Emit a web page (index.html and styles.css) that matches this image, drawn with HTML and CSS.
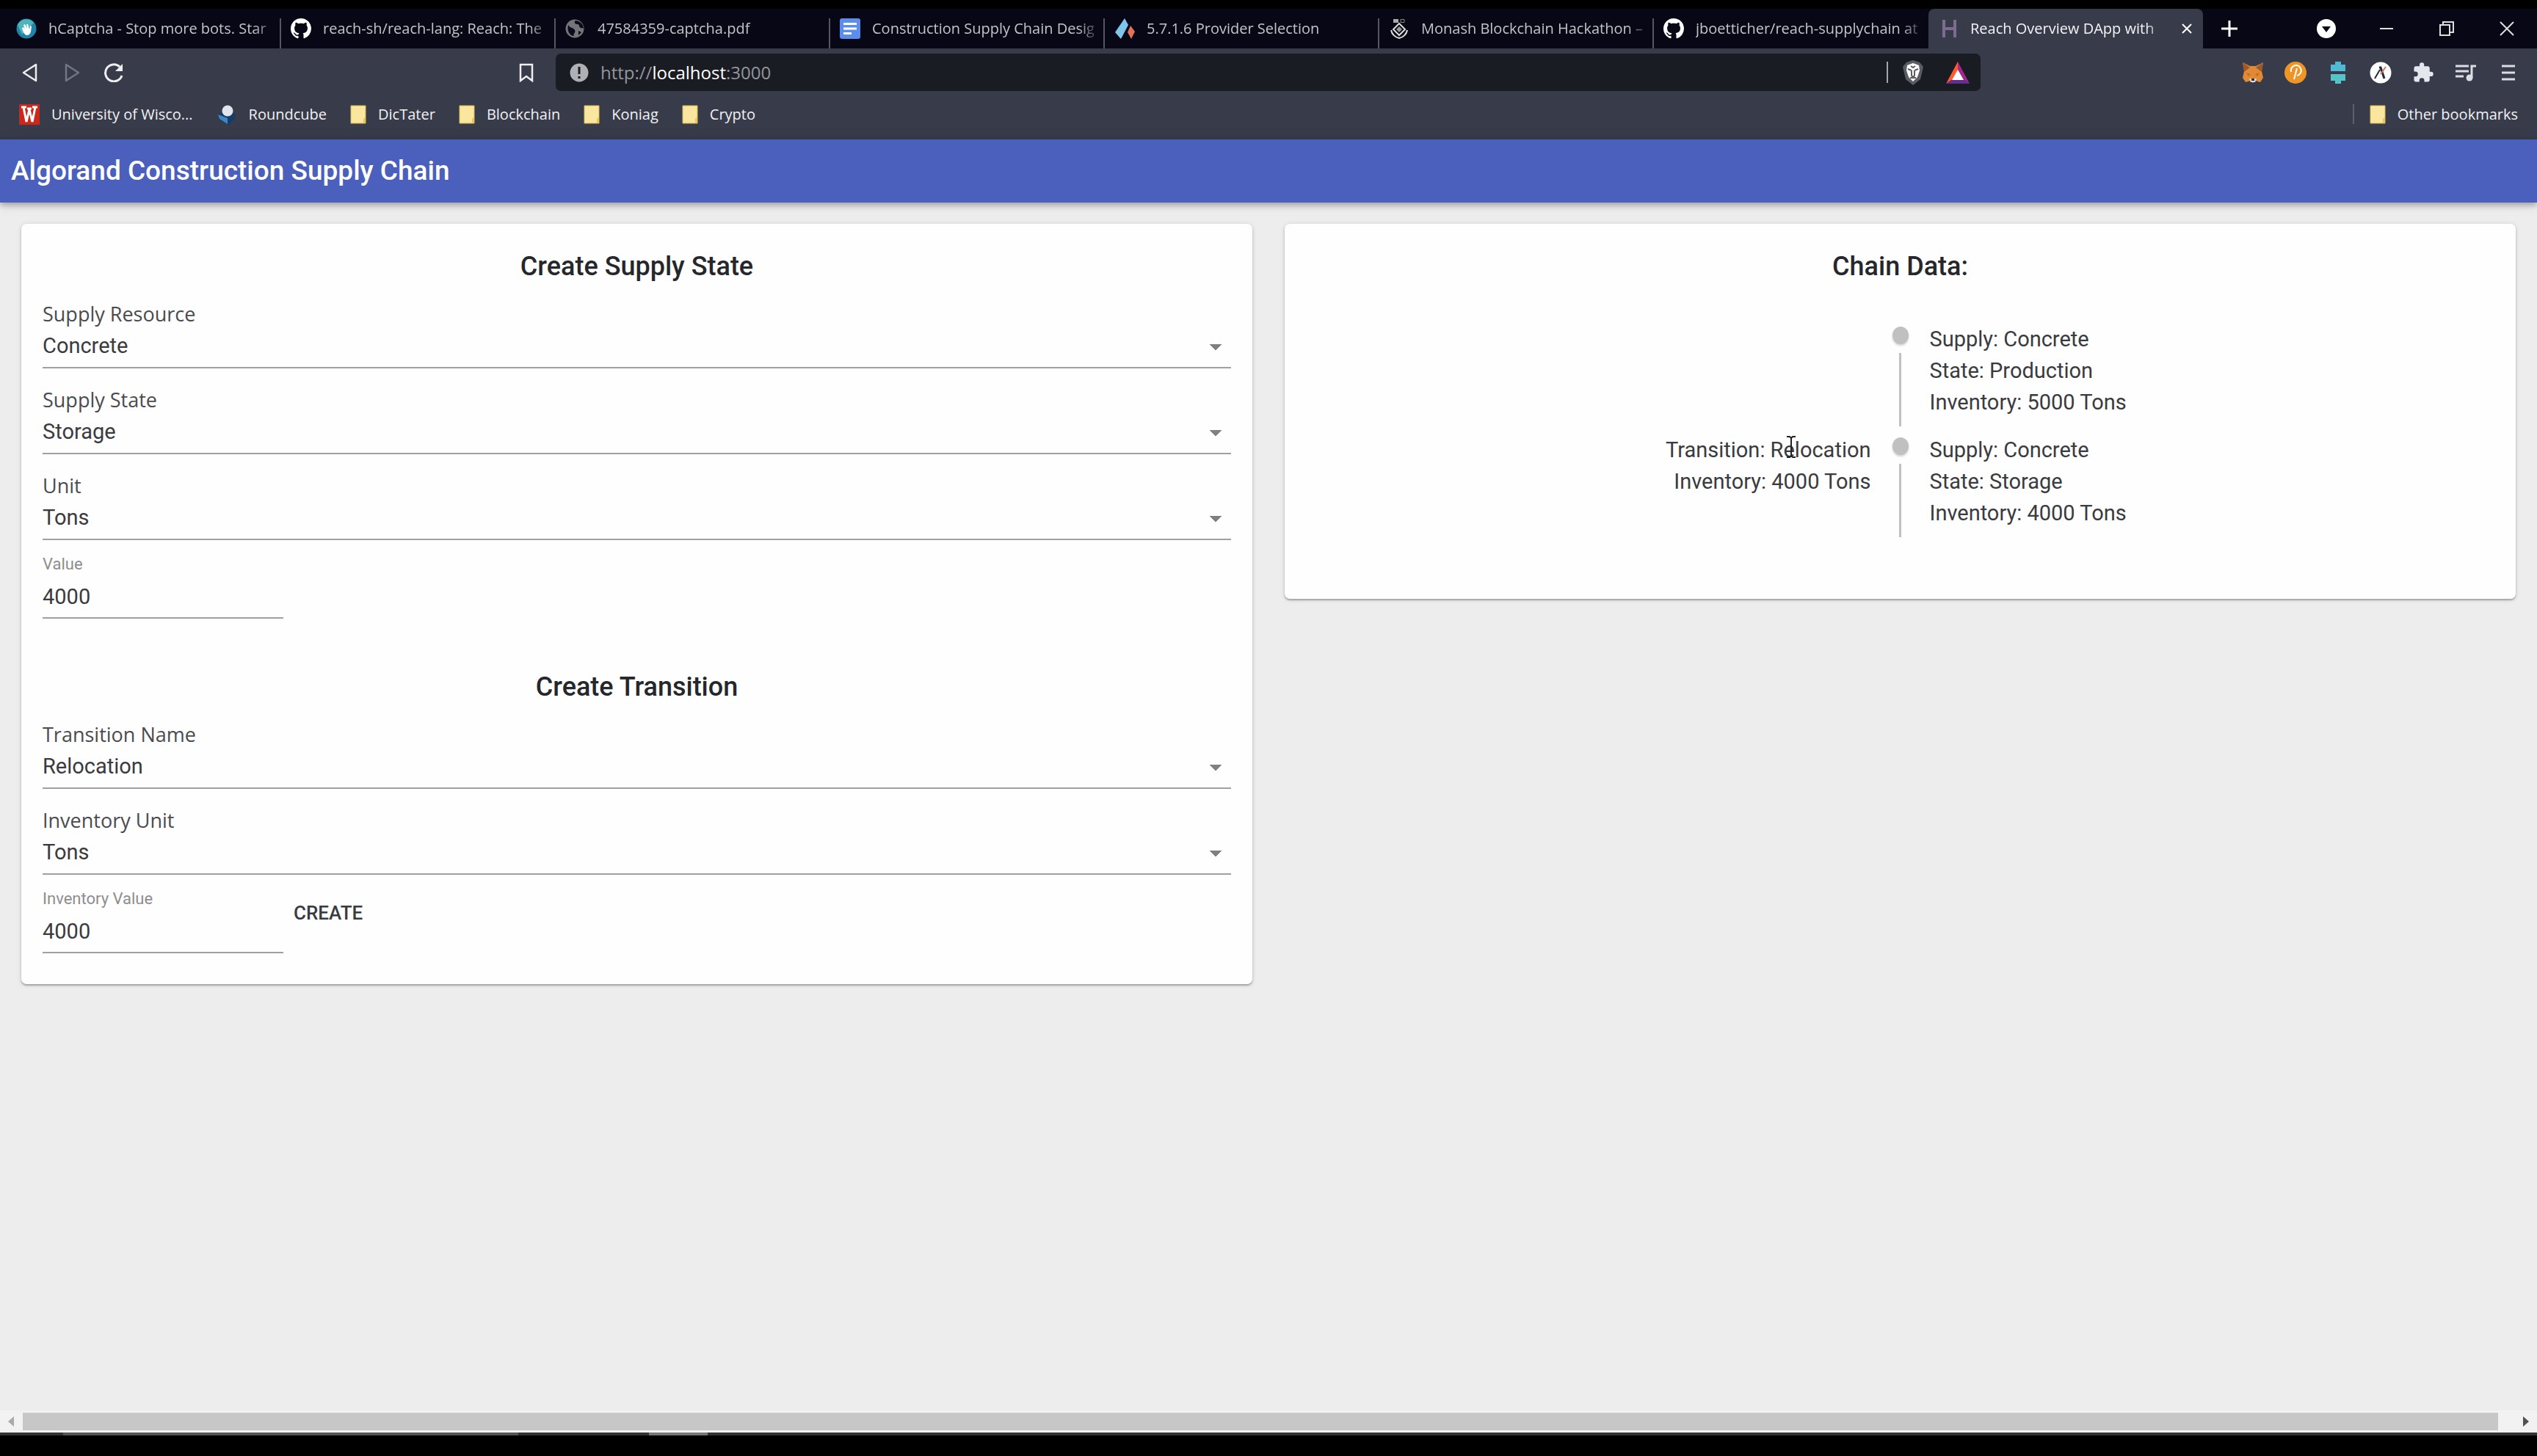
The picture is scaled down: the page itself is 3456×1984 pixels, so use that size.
FILE: index.html
```html
<!DOCTYPE html>
<html lang="en">
<head>
<meta charset="utf-8">
<title>Reach Overview DApp with</title>
<link rel="stylesheet" href="styles.css">
</head>
<body>
<svg class="defs" aria-hidden="true">
  <symbol id="github" viewBox="0 0 16 16"><path fill="#fff" d="M8 0C3.58 0 0 3.58 0 8c0 3.54 2.29 6.53 5.47 7.59.4.07.55-.17.55-.38 0-.19-.01-.82-.01-1.49-2.01.37-2.53-.49-2.69-.94-.09-.23-.48-.94-.82-1.13-.28-.15-.68-.52-.01-.53.63-.01 1.08.58 1.23.82.72 1.21 1.87.87 2.33.66.07-.52.28-.87.51-1.07-1.78-.2-3.64-.89-3.64-3.95 0-.87.31-1.59.82-2.15-.08-.2-.36-1.02.08-2.12 0 0 .67-.21 2.2.82.64-.18 1.32-.27 2-.27s1.36.09 2 .27c1.53-1.04 2.2-.82 2.2-.82.44 1.1.16 1.92.08 2.12.51.56.82 1.27.82 2.15 0 3.07-1.87 3.75-3.65 3.95.29.25.54.73.54 1.48 0 1.07-.01 1.93-.01 2.2 0 .21.15.46.55.38A8.01 8.01 0 0 0 16 8c0-4.42-3.58-8-8-8z"/></symbol>
  <symbol id="folder" viewBox="0 0 22 26"><path fill="#fbe6a0" stroke="#d9b94f" d="M1 1h20v24H1z"/><path fill="#e8c65c" d="M18 19l3-3v9h-3z"/></symbol>
</svg>

<header class="browser">
  <div class="tabstrip">
    <nav class="tabs" aria-label="Tabs">
      <a class="tab" href="#"><svg class="favicon" viewBox="0 0 28 28"><circle cx="14" cy="14" r="13.500" fill="#1f86a8"/><path d="M2 9a13 13 0 0 1 22-3L8 22z" fill="#4fb3bb"/><path fill="#fff" d="M8 13l2-1 2 3-2-6 2-1 3 6-1-6 2 0 2 7 1-5 2 1-1 7c-1 4-3 5-6 5-3-1-5-5-6-10z"/></svg><span class="tab-title">hCaptcha - Stop more bots. Star</span></a>
      <a class="tab" href="#"><svg class="favicon"><use href="#github"/></svg><span class="tab-title">reach-sh/reach-lang: Reach: The</span></a>
      <a class="tab" href="#"><svg class="favicon" viewBox="0 0 28 28"><circle cx="13" cy="14" r="12.500" fill="#74757b"/><path fill="#0b0b1a" d="M4 9c3 5 7 3 9 7s-3 4-1 8c-6 0-10-7-8-15zM14 3c-3 3 0 5 3 5s1 4 4 5 3-1 4 2c0-6-3-11-11-12zM18 17l4 2-4 4z"/></svg><span class="tab-title">47584359-captcha.pdf</span></a>
      <a class="tab" href="#"><svg class="favicon" viewBox="0 0 28 28"><rect width="28" height="28" rx="3" fill="#5b8def"/><path stroke="#fff" stroke-width="3" d="M5 7.500h18M5 14h18M5 20.500h11"/></svg><span class="tab-title">Construction Supply Chain Desig</span></a>
      <a class="tab" href="#"><svg class="favicon" viewBox="0 0 28 28"><path fill="#7fc4ea" d="M14 0l5 9-10 19-8-9z"/><path fill="#e2725b" d="M22 10l6 8-5 10-5-9z"/></svg><span class="tab-title">5.7.1.6 Provider Selection</span></a>
      <a class="tab" href="#"><svg class="favicon" viewBox="0 0 28 28"><path fill="#aaa" d="M6 1h7v5H6z"/><path fill="none" stroke="#888" d="M16 1.500h5v4h-5z"/><path fill="none" stroke="#ddd" stroke-width="2" d="M14 7l8 8-8 8-8-8zM3 16c1 6 6 10 11 11 5-1 10-5 11-11"/><path fill="#999" d="M14 11l4 4-4 4-4-4z"/></svg><span class="tab-title">Monash Blockchain Hackathon –</span></a>
      <a class="tab" href="#"><svg class="favicon"><use href="#github"/></svg><span class="tab-title">jboetticher/reach-supplychain at</span></a>
      <a class="tab active" href="#" aria-current="page"><svg class="favicon" viewBox="0 0 28 28"><path fill="none" stroke="#7e6b90" stroke-width="4" d="M8 2v24M23 2v24M8 14h15"/></svg><span class="tab-title">Reach Overview DApp with</span><svg class="close" viewBox="0 0 16 16"><path stroke="#fff" stroke-width="2" d="M2 2l12 12M14 2L2 14"/></svg></a>
    </nav>
    <button class="new-tab" aria-label="New tab"><svg viewBox="0 0 22 22"><path stroke="#fff" stroke-width="3" d="M11 0v22M0 11h22"/></svg></button>
    <div class="window-controls">
      <button aria-label="Search tabs"><svg viewBox="0 0 26 26"><circle cx="13" cy="13" r="13" fill="#fff"/><path fill="#0a0a18" d="M7 10h12l-6 8z"/></svg></button>
      <button aria-label="Minimize"><svg viewBox="0 0 26 26"><path stroke="#ddd" stroke-width="2" d="M4 13h18"/></svg></button>
      <button aria-label="Restore"><svg viewBox="0 0 26 26"><path fill="none" stroke="#ddd" stroke-width="2" d="M4 8h13v14H4zM8 8V4h14v14h-5"/></svg></button>
      <button aria-label="Close"><svg viewBox="0 0 26 26"><path stroke="#ddd" stroke-width="2" d="M4 4l18 18M22 4L4 22"/></svg></button>
    </div>
  </div>

  <div class="toolbar">
    <div class="nav-buttons">
      <button aria-label="Back"><svg viewBox="0 0 26 26"><path fill="none" stroke="#eee" stroke-width="2.500" stroke-linejoin="round" d="M21 2v22L4 13z"/></svg></button>
      <button aria-label="Forward"><svg viewBox="0 0 26 26"><path fill="none" stroke="#74767f" stroke-width="2.500" stroke-linejoin="round" d="M5 2v22l17-11z"/></svg></button>
      <button aria-label="Reload"><svg viewBox="0 0 26 26"><path fill="none" stroke="#eee" stroke-width="3" d="M24 17A11.500 11.500 0 1 1 21 5"/><path fill="#eee" d="M25 1v10H15z"/></svg></button>
    </div>
    <button class="bookmark" aria-label="Bookmark this page"><svg viewBox="0 0 26 26"><path fill="none" stroke="#eee" stroke-width="2.500" d="M5 2h16v22l-8-6-8 6z"/></svg></button>
    <div class="address">
      <svg viewBox="0 0 26 26"><circle cx="13" cy="13" r="12.500" fill="#aeb0b5"/><path stroke="#1a1c24" stroke-width="3" d="M13 5v10M13 18v3"/></svg>
      <div class="url" role="textbox" aria-label="Address">http://<b>localhost</b>:3000</div>
      <span class="rule"></span>
      <svg class="shield" viewBox="0 0 28 34"><path fill="#5a5c66" d="M5 3l9-3 9 3 5 6-4 17-10 8-10-8L0 9z"/><path fill="#fff" d="M6 7l8-3 8 3 1 7-3 9-6 6-6-6-3-9z"/><path fill="none" stroke="#5a5c66" stroke-width="2" d="M7 12l5 2M21 12l-5 2M12 14v7l2 2 2-2v-7M10 24h8M11 8l3 2 3-2"/></svg>
      <svg class="bat" viewBox="0 0 32 30"><path fill="#ff5b2e" d="M16 0v12l-7 12-9 6z"/><path fill="#a3278f" d="M16 0l16 30-9-6-7-12z"/><path fill="#662d91" d="M0 30l9-6h14l9 6z"/><path fill="#fff" d="M16 11l8 14H8z"/></svg>
    </div>
    <div class="extensions">
      <button aria-label="MetaMask"><svg viewBox="0 0 30 30"><path fill="#e08a35" d="M1 1l10 5h8l10-5-2 12 2 9-4 6-7-2-3 3-3-3-7 2-4-6 2-9z"/><path fill="#9c5a2b" d="M1 1l10 7-8 6zM29 1L19 8l8 6z"/><path fill="#ca6a22" d="M6 15l6 2-3 3zM24 15l-6 2 3 3z"/><path fill="#ddd" d="M10 23h10l-2 5h-6z"/><path fill="#333" d="M13 23h4v3h-4z"/></svg></button>
      <button aria-label="Polkadot"><svg viewBox="0 0 30 30"><circle cx="15" cy="15" r="15" fill="#ee9526"/><path fill="none" stroke="#fff" stroke-width="2" d="M9 14a7 7 0 1 1 8 5M17 9l-4 15"/></svg></button>
      <button aria-label="Ledger"><svg viewBox="0 0 30 30"><path fill="#4fb9d6" d="M11 0h8v4h6v9H5V4h6z"/><path fill="#55c4c8" d="M5 17h20v9h-6v4h-8v-4H5z"/></svg></button>
      <button aria-label="AlgoSigner"><svg viewBox="0 0 30 30"><circle cx="15" cy="15" r="14.500" fill="#fff"/><path fill="none" stroke="#222c40" stroke-width="3" d="M13 8h2l5 15"/><path stroke="#222c40" stroke-width="2" d="M7 23l7-12"/><path stroke="#e2725b" stroke-width="2" d="M15 17l7-10"/></svg></button>
      <button aria-label="Extensions"><svg viewBox="0 0 24 24"><path fill="#e6e7ee" d="M20.500 11H19V7c0-1.100-.9-2-2-2h-4V3.500a2.500 2.500 0 0 0-5 0V5H4c-1.100 0-2 .9-2 2v3.800h1.500a2.700 2.700 0 0 1 0 5.400H2V20c0 1.100.9 2 2 2h3.800v-1.500a2.700 2.700 0 0 1 5.400 0V22H17c1.100 0 2-.9 2-2v-4h1.500a2.500 2.500 0 0 0 0-5z"/></svg></button>
      <button aria-label="Media"><svg viewBox="0 0 30 30"><path stroke="#dcdde3" stroke-width="3" d="M1 6h18M1 13h18M1 20h11"/><path fill="none" stroke="#dcdde3" stroke-width="3" d="M23 22V6h6"/><circle cx="20" cy="22" r="4.500" fill="#dcdde3"/></svg></button>
      <button aria-label="Menu"><svg viewBox="0 0 30 30"><path stroke="#dcdde3" stroke-width="3" d="M6 6h18M6 15h18M6 24h18"/></svg></button>
    </div>
  </div>

  <nav class="bookmarks" aria-label="Bookmarks">
    <a href="#"><svg class="favicon" viewBox="0 0 28 28"><path fill="#c9281c" d="M0 0h28v28H0z"/><path fill="none" stroke="#fff" stroke-width="3" d="M6 4l4 20 4-17 4 17 4-20M3 4h7M18 4h7M11 6h6"/></svg>University of Wisco...</a>
    <a href="#"><svg class="favicon" viewBox="0 0 28 28"><path fill="#163d66" d="M2 14l12-6 12 6-2 7-8 7-12-7z"/><path fill="#3f86c4" d="M2 14l13 5v8L4 20z"/><circle cx="15" cy="9" r="7.500" fill="#dfe6ee"/></svg>Roundcube</a>
    <a href="#"><svg class="folder"><use href="#folder"/></svg>DicTater</a>
    <a href="#"><svg class="folder"><use href="#folder"/></svg>Blockchain</a>
    <a href="#"><svg class="folder"><use href="#folder"/></svg>Koniag</a>
    <a href="#"><svg class="folder"><use href="#folder"/></svg>Crypto</a>
    <a class="other" href="#"><svg class="folder"><use href="#folder"/></svg>Other bookmarks</a>
  </nav>
</header>

<div class="app">
  <header class="appbar"><h1>Algorand Construction Supply Chain</h1></header>
  <main class="cards">
    <form class="card form">
      <h2>Create Supply State</h2>
      <div class="fields">
        <div class="field"><label for="resource">Supply Resource</label><select id="resource"><option>Concrete</option></select></div>
        <div class="field"><label for="state">Supply State</label><select id="state"><option>Storage</option></select></div>
        <div class="field"><label for="unit">Unit</label><select id="unit"><option>Tons</option></select></div>
        <div class="textfield"><label for="value">Value</label><input id="value" type="text" value="4000"></div>
      </div>
      <h2 class="second">Create Transition</h2>
      <div class="fields">
        <div class="field"><label for="transition">Transition Name</label><select id="transition"><option>Relocation</option></select></div>
        <div class="field"><label for="inv-unit">Inventory Unit</label><select id="inv-unit"><option>Tons</option></select></div>
        <div class="submit-row">
          <div class="textfield"><label for="inv-value">Inventory Value</label><input id="inv-value" type="text" value="4000"></div>
          <button class="create" type="button">CREATE</button>
        </div>
      </div>
    </form>

    <section class="card">
      <h2>Chain Data:</h2>
      <ul class="timeline">
        <li>
          <div class="before"></div>
          <div class="marker"></div>
          <div class="after"><p>Supply: Concrete</p><p>State: Production</p><p>Inventory: 5000 Tons</p></div>
        </li>
        <li>
          <div class="before"><p>Transition: Relocation</p><p>Inventory: 4000 Tons</p>
            <svg class="cursor" viewBox="0 0 14 30" aria-hidden="true"><path fill="none" stroke="#222" stroke-width="2" d="M1 1h4l2 2 2-2h4M7 3v24M1 29h4l2-2 2 2h4"/></svg></div>
          <div class="marker"></div>
          <div class="after"><p>Supply: Concrete</p><p>State: Storage</p><p>Inventory: 4000 Tons</p></div>
        </li>
      </ul>
    </section>
  </main>
</div>

<div class="scrollbar">
  <svg viewBox="0 0 8 14"><path fill="#aaa" d="M8 0v14L0 7z"/></svg>
  <div class="thumb"></div>
  <svg viewBox="0 0 8 14"><path fill="#505050" d="M0 0v14l8-7z"/></svg>
</div>
<div class="taskbar"><span class="task-wide"></span><span class="task-small"></span></div>
</body>
</html>
```
FILE: styles.css
```css
* { box-sizing: border-box; }

body {
  margin: 0;
  min-height: 100vh;
  display: flex;
  flex-direction: column;
  padding: 12px 0 28px;
  background: #000;
  font-family: Roboto, sans-serif;
  color: #3a3b40;
}

.defs { display: none; }
h1, h2, p, ul { margin: 0; padding: 0; font-weight: 400; }
button { border: 0; padding: 0; background: none; font: inherit; color: inherit; }
a { color: inherit; text-decoration: none; }
svg { display: block; flex: none; }

/* Browser chrome */
.browser {
  font-family: "Open Sans", "Noto Sans", sans-serif;
  font-size: 20px;
  color: #f1f1f3;
  background: #373b4a;
}

.tabstrip {
  display: flex;
  align-items: center;
  height: 54px;
  padding-left: 9px;
  background: #070715;
}
.tabs { display: flex; flex: 0 1 2992px; height: 54px; }
.tab {
  flex: 1 1 0;
  min-width: 0;
  display: flex;
  align-items: center;
  gap: 16px;
  padding: 0 4px 0 13px;
  color: #c3c3c8;
  background: linear-gradient(#55565f, #55565f) right bottom / 2px 41px no-repeat;
}
.tab:nth-last-child(2) { background: none; }
.tab.active {
  background: #373b4a;
  border-radius: 8px 8px 0 0;
  color: #f4f4f6;
  font-weight: 500;
}
.favicon { width: 28px; height: 28px; }
.tab-title {
  flex: 1;
  min-width: 0;
  overflow: hidden;
  white-space: nowrap;
  line-height: 32px;
  mask-image: linear-gradient(90deg, #000 calc(100% - 32px), transparent);
}
.close { width: 16px; height: 16px; margin-right: 10px; }
.new-tab { margin-left: 25px; }
.new-tab svg { width: 22px; height: 22px; }
.window-controls { display: flex; gap: 56px; margin-left: auto; padding-right: 28px; }
.window-controls svg { width: 26px; height: 26px; }

.toolbar { display: flex; align-items: center; height: 65px; padding: 0 24px 0 28px; }
.toolbar svg { width: 26px; height: 26px; }
.nav-buttons { display: flex; flex: 0 1 676px; gap: 31px; }
.address {
  display: flex;
  align-items: center;
  flex: 0 1 1941px;
  height: 51px;
  margin-left: 27px;
  padding: 0 15px 0 19px;
  border-radius: 7px;
  background: #1a1c24;
}
.url { flex: 1; padding-left: 16px; font-size: 24px; color: #94959c; }
.url b { font-weight: 400; color: #fff; }
.rule { width: 2px; height: 29px; margin-right: 20px; background: #a5a6ab; }
.address .shield { width: 28px; height: 34px; margin-right: 31px; }
.address .bat { width: 32px; height: 30px; }
.extensions { display: flex; gap: 28px; margin-left: auto; }
.toolbar .extensions svg { width: 30px; height: 30px; }

.bookmarks { display: flex; align-items: center; gap: 32px; height: 59px; padding: 0 26px 10px; }
.bookmarks a { display: flex; align-items: center; gap: 16px; }
.folder { width: 22px; height: 26px; }
.bookmarks .other { margin-left: auto; padding-left: 21px; border-left: 2px solid #5d606c; }

/* Application */
.app { flex: 1; background: #ededed; }
.appbar {
  display: flex;
  align-items: center;
  height: 86px;
  padding: 0 15px;
  background: #4b60bd;
  color: #fff;
  box-shadow: 0 4px 7px rgba(0, 0, 0, .25), 0 2px 18px rgba(0, 0, 0, .1);
}
h1, h2 { font-size: 36px; font-weight: 500; line-height: 58px; }
h1 { font-size: 37px; }
h2 { text-align: center; color: #26272b; }

.cards {
  display: grid;
  grid-template-columns: 1fr 1fr;
  align-items: start;
  gap: 44px;
  padding: 29px;
}
.card {
  padding: 29px 29px 84px;
  border-radius: 7px;
  background: #fefefe;
  box-shadow: 0 2px 2px rgba(0, 0, 0, .25), 0 1px 6px rgba(0, 0, 0, .14);
}
.form { padding-bottom: 42px; }
.second { margin-top: 64px; }
.fields { display: flex; flex-direction: column; gap: 22px; margin-top: 15px; }
.field { display: flex; flex-direction: column; }
.field label { font: 400 27px/42px "Open Sans", "Noto Sans", sans-serif; color: #4a4b50; }
select, input {
  appearance: none;
  width: 100%;
  margin: 0;
  border: 0;
  border-bottom: 2px solid #a0a0a0;
  border-radius: 0;
  background: transparent;
  font: 400 29px/44px Roboto, sans-serif;
  color: #3a3b40;
  outline: 0;
}
select {
  height: 53px;
  padding: 0 0 7px;
  background: conic-gradient(from -45deg at 50% 100%, #808080 90deg, transparent 0) right 13px top 20px / 16px 8px no-repeat;
}
.textfield { display: flex; flex-direction: column; width: 328px; }
.textfield label { font-size: 22px; line-height: 22px; color: #8e8e8e; }
input { height: 63px; padding: 11px 0 6px; }
.submit-row { display: flex; align-items: flex-start; }
.create { height: 60px; padding: 0 14px; font-size: 26px; font-weight: 500; }

.timeline { margin-top: 38px; list-style: none; }
.timeline li { display: grid; grid-template-columns: 1fr 22px 1fr; gap: 29px; }
.timeline p { font-size: 29px; line-height: 43px; }
.before, .after { padding: 11px 0; }
.before { position: relative; text-align: right; }
.marker { display: flex; flex-direction: column; align-items: center; gap: 12px; padding-top: 15px; }
.marker::before {
  content: "";
  width: 22px;
  height: 24px;
  border-radius: 50%;
  background: #c0c0c0;
  box-shadow: 0 2px 3px rgba(0, 0, 0, .18);
}
.marker::after { content: ""; flex: 1; width: 3px; background: #c0c0c0; }
.cursor { position: absolute; top: 13px; right: 102px; width: 14px; height: 30px; }

/* Bottom of the window */
.scrollbar { display: flex; align-items: center; height: 30px; padding: 0 11px; background: #f2f2f2; }
.scrollbar svg { width: 8px; height: 14px; }
.thumb { flex: 1; height: 24px; margin: 0 34px 0 12px; background: #c7c7c7; }
.taskbar { display: flex; height: 4px; padding-left: 86px; background: #333; }
.task-wide { width: 620px; background: #555; }
.task-small { width: 80px; margin-left: 178px; background: #777; }
```
